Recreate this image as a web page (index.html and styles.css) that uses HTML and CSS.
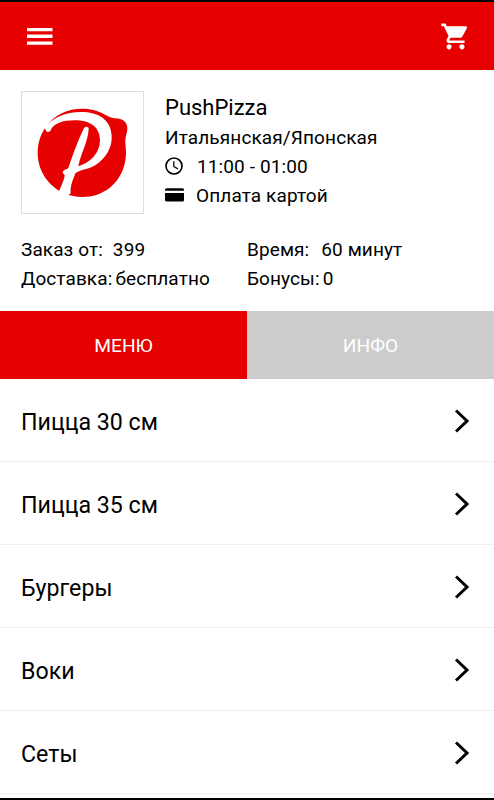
FILE: index.html
```html
<!DOCTYPE html>
<html lang="ru">
<head>
  <meta charset="UTF-8">
  <title>PushPizza</title>
  <meta name="viewport" content="width=device-width, initial-scale=1.0">
  <link rel="stylesheet" href="styles.css">
</head>
<body>
  <header class="header">
    <svg class="burger" viewBox="0 0 26 17" fill="#fff">
      <path d="M0 0h25.5v3.2H0zM0 6.6h25.5v3.4H0zM0 13.4h25.5v3.3H0z"/>
    </svg>
    <svg class="cart" viewBox="0 0 24 24" fill="#fff">
      <path d="M7 18c-1.1 0-1.99.9-1.99 2S5.9 22 7 22s2-.9 2-2-.9-2-2-2zM1 2v2h2l3.6 7.59-1.35 2.45c-.16.28-.25.61-.25.96 0 1.1.9 2 2 2h12v-2H7.42c-.14 0-.25-.11-.25-.25l.03-.12.9-1.63h7.45c.75 0 1.41-.41 1.75-1.03l3.58-6.49c.08-.14.12-.31.12-.48 0-.55-.45-1-1-1H5.21l-.94-2H1zm16 16c-1.1 0-1.99.9-1.99 2s.89 2 1.99 2 2-.9 2-2-.9-2-2-2z"/>
    </svg>
  </header>

  <section class="place">
    <div class="logo">
      <svg viewBox="21 21 363 363">
        <path fill="#e60000" d="M92 126C118 88 158 71 202 71c28 0 51 7 72 20 17 11 31 8 43 12 14 4 21 16 20 30-1 12-6 22-6 35 0 12 2 22 2 35 0 75-56 133-131 133C126 336 68 276 68 204c0-29 8-55 24-78z"/>
        <path fill="#fff" d="M88 128c7 12 8 16 18 10 8-23 38-32 72-32 50 0 77 22 77 60 0 38-29 67-65 78 6-34 30-77 31-112 0-9-11-8-15-1-16 32-32 76-46 118-5 5-13 3-17 13 0 5 6 5 6 10-1 12-10 28-15 42l-4 12 20 7c7-1 12-4 17-8-2-24 8-43 14-60 15-13 42-12 62-26 31-22 49-52 47-87-3-48-38-71-93-71-45 0-84 17-109 47z"/>
      </svg>
    </div>
    <div class="about">
      <h1 class="name">PushPizza</h1>
      <p>Итальянская/Японская</p>
      <p class="with-icon">
        <svg class="clock" viewBox="0 0 20 20" fill="none" stroke="#000" stroke-width="1.8">
          <circle cx="10" cy="10" r="8.9"/>
          <path stroke-width="1.4" d="M9.8 4.8v5.7l4.5 2.7"/>
        </svg>
        <span>11:00 - 01:00</span>
      </p>
      <p class="with-icon">
        <svg class="card" viewBox="0 0 19 14">
          <path d="M0 2.8V1.7Q0 .2 1.5 .2h16Q19 .2 19 1.7v1.1zM0 5h19v7.3q0 1.2-1.5 1.2h-16Q0 13.5 0 12.3z"/>
        </svg>
        <span>Оплата картой</span>
      </p>
    </div>
  </section>

  <section class="terms">
    <p><span class="label order">Заказ от:</span>399</p>
    <p><span class="label time">Время:</span>60 минут</p>
    <p><span class="label">Доставка:</span>бесплатно</p>
    <p><span class="label">Бонусы:</span>0</p>
  </section>

  <nav class="tabs">
    <div class="tab active">МЕНЮ</div>
    <div class="tab">ИНФО</div>
  </nav>

  <ul class="menu">
    <li><span>Пицца 30 см</span> <svg class="arrow" viewBox="0 0 16 24"><path d="M2 1.5L13 12 2 22.5"/></svg></li>
    <li><span>Пицца 35 см</span> <svg class="arrow" viewBox="0 0 16 24"><path d="M2 1.5L13 12 2 22.5"/></svg></li>
    <li><span>Бургеры</span> <svg class="arrow" viewBox="0 0 16 24"><path d="M2 1.5L13 12 2 22.5"/></svg></li>
    <li><span>Воки</span> <svg class="arrow" viewBox="0 0 16 24"><path d="M2 1.5L13 12 2 22.5"/></svg></li>
    <li><span>Сеты</span> <svg class="arrow" viewBox="0 0 16 24"><path d="M2 1.5L13 12 2 22.5"/></svg></li>
  </ul>
</body>
</html>
```
FILE: styles.css
```css
* {
  box-sizing: border-box;
}
body {
  margin: 0;
  height: 800px;
  overflow: hidden;
  border-top: 2px solid #000;
  border-bottom: 2px solid #000;
  background: #fff;
  color: #000;
  font-family: Roboto, sans-serif;
  font-size: 19px;
}
h1, p, ul {
  margin: 0;
  padding: 0;
}
svg {
  display: block;
  flex: none;
}
.header {
  display: flex;
  justify-content: space-between;
  align-items: center;
  height: 68px;
  padding: 0 23px 0 27px;
  background: #e60000;
}
.burger {
  width: 26px;
  height: 17px;
}
.cart {
  width: 31px;
  height: 31px;
}
.place {
  display: flex;
  padding: 21px 21px 0;
}
.logo {
  width: 123px;
  height: 123px;
  border: 1px solid #ddd;
}
.about {
  padding-left: 21px;
  line-height: 29px;
  letter-spacing: 0.12px;
}
.name {
  height: 32px;
  line-height: 33px;
  font-size: 22px;
  font-weight: 400;
  letter-spacing: 0;
}
.with-icon {
  display: flex;
  align-items: center;
}
.clock {
  width: 18px;
  height: 18px;
  margin: 0 14px 2px 0;
}
.card {
  width: 19px;
  height: 14px;
  margin: 0 12px 2px 0;
}
.terms {
  display: grid;
  grid-template-columns: 226px 1fr;
  height: 97px;
  padding: 21px 21px 0;
  line-height: 29px;
  letter-spacing: 0.1px;
  align-content: start;
}
.label {
  margin-right: 3px;
}
.order {
  margin-right: 10px;
}
.time {
  margin-right: 12px;
}
.tabs {
  display: flex;
  height: 68px;
}
.tab {
  flex: 1;
  background: #ccc;
  color: #fff;
  font-size: 19.2px;
  line-height: 70px;
  text-align: center;
}
.active {
  background: #e60000;
}
.menu {
  list-style: none;
}
.menu li {
  display: flex;
  justify-content: space-between;
  align-items: center;
  height: 83px;
  padding: 0 24px 0 21px;
  border-bottom: 1px solid #eee;
  font-size: 23.2px;
}
.menu span {
  padding-top: 4px;
}
.arrow {
  width: 16px;
  height: 24px;
  margin-top: 1px;
  fill: none;
  stroke: #000;
  stroke-width: 3;
}
```
